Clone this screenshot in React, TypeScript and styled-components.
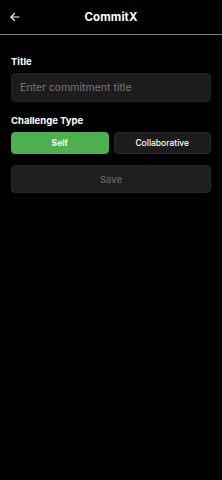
import React, { useState } from 'react';
import styled, { createGlobalStyle } from 'styled-components';

const GlobalStyle = createGlobalStyle`
    html, body {
        margin: 0;
        padding: 0;
        background: #000000;
    }
    body {
        font-family: Inter, "Noto Sans", sans-serif;
        -webkit-font-smoothing: antialiased;
    }
`;

const Screen = styled.div`
    width: 222px;
    min-height: 480px;
    background: #000000;
    color: #ffffff;
    display: flex;
    flex-direction: column;
`;

const Header = styled.header`
    height: 35px;
    display: grid;
    grid-template-columns: 34px 1fr 34px;
    align-items: center;
    border-bottom: 1px solid #7d7d7d;
    box-sizing: border-box;
`;

const BackButton = styled.button`
    background: none;
    border: none;
    padding: 0 0 0 9px;
    height: 100%;
    display: flex;
    align-items: center;
    color: #ffffff;
    cursor: pointer;
`;

const HeaderTitle = styled.h1`
    margin: 0;
    text-align: center;
    font-size: 11.5px;
    font-weight: 700;
    letter-spacing: 0.1px;
`;

const Form = styled.div`
    padding: 20px 11px 0;
    display: flex;
    flex-direction: column;
`;

const Label = styled.label`
    font-size: 9.5px;
    font-weight: 700;
    margin-bottom: 5px;
    line-height: 13px;
`;

const TextInput = styled.input`
    height: 29px;
    box-sizing: border-box;
    background: #1c1c1c;
    border: 1px solid #222222;
    border-radius: 4px;
    padding: 0 8px;
    color: #ffffff;
    font-family: inherit;
    font-size: 10.5px;
    margin-bottom: 12px;
    outline: none;

    &::placeholder {
        color: #777777;
    }
`;

const TypeRow = styled.div`
    display: grid;
    grid-template-columns: 1fr 1fr;
    gap: 5px;
    margin-bottom: 11px;
`;

const TypeButton = styled.button<{ $active: boolean }>`
    height: 22px;
    border-radius: 4px;
    border: 1px solid ${(p) => (p.$active ? '#4caf50' : '#2a2a2a')};
    background: ${(p) => (p.$active ? '#4caf50' : '#1c1c1c')};
    color: #ffffff;
    font-family: inherit;
    font-size: 8.5px;
    font-weight: ${(p) => (p.$active ? 700 : 500)};
    cursor: pointer;
`;

const SaveButton = styled.button`
    height: 28px;
    border-radius: 4px;
    border: 1px solid #262626;
    background: #1e1e1e;
    color: #666666;
    font-family: inherit;
    font-size: 9.5px;
    font-weight: 500;
`;

export default function App() {
    const [type, setType] = useState<'self' | 'collab'>('self');

    return (
        <>
            <GlobalStyle />
            <Screen>
                <Header>
                    <BackButton aria-label="Back">
                        <svg width="12" height="12" viewBox="0 0 24 24" fill="none" stroke="#ffffff" strokeWidth="2.4" strokeLinecap="round" strokeLinejoin="round">
                            <path d="M20 12H4" />
                            <path d="M11 5l-7 7 7 7" />
                        </svg>
                    </BackButton>
                    <HeaderTitle>CommitX</HeaderTitle>
                    <span />
                </Header>
                <Form>
                    <Label>Title</Label>
                    <TextInput placeholder="Enter commitment title" />
                    <Label>Challenge Type</Label>
                    <TypeRow>
                        <TypeButton $active={type === 'self'} onClick={() => setType('self')}>
                            Self
                        </TypeButton>
                        <TypeButton $active={type === 'collab'} onClick={() => setType('collab')}>
                            Collaborative
                        </TypeButton>
                    </TypeRow>
                    <SaveButton disabled>Save</SaveButton>
                </Form>
            </Screen>
        </>
    );
}
